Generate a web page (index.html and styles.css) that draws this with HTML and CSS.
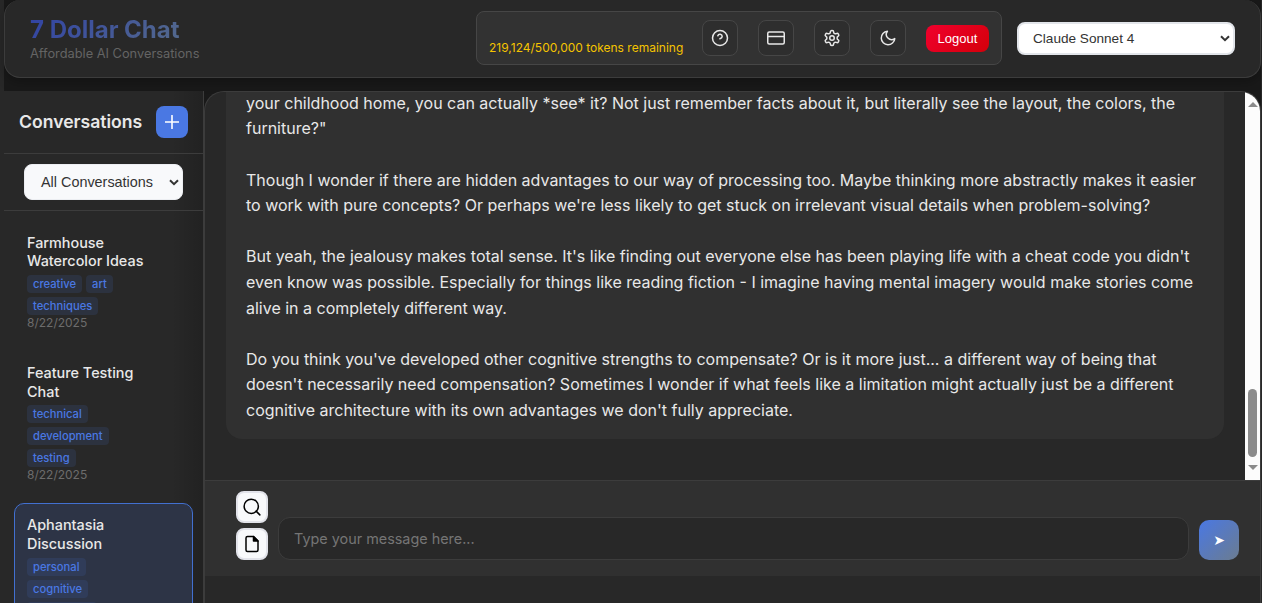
FILE: index.html
```html
<!DOCTYPE html>
<html lang="en">
<head>
	<meta charset="UTF-8">
	<title>7 Dollar Chat</title>
	<link rel="stylesheet" href="styles.css">
</head>
<body>
	<div class="app">
		<header class="header">
			<div class="brand">
				<h1>7 Dollar Chat</h1>
				<p>Affordable AI Conversations</p>
			</div>
			<div class="user-bar">
				<span class="tokens">219,124/500,000 tokens remaining</span>
				<button class="icon-btn"><svg viewBox="0 0 24 24"><circle cx="12" cy="12" r="10"/><path d="M9.09 9a3 3 0 0 1 5.83 1c0 2-3 3-3 3"/></svg></button>
				<button class="icon-btn"><svg viewBox="0 0 24 24"><rect x="1" y="4" width="22" height="16" rx="2"/><path d="M1 10h22"/></svg></button>
				<button class="icon-btn"><svg viewBox="0 0 24 24"><path d="M12.22 2h-.44a2 2 0 0 0-2 2v.18a2 2 0 0 1-1 1.73l-.43.25a2 2 0 0 1-2 0l-.15-.08a2 2 0 0 0-2.73.73l-.22.38a2 2 0 0 0 .73 2.73l.15.1a2 2 0 0 1 1 1.72v.51a2 2 0 0 1-1 1.74l-.15.09a2 2 0 0 0-.73 2.73l.22.38a2 2 0 0 0 2.73.73l.15-.08a2 2 0 0 1 2 0l.43.25a2 2 0 0 1 1 1.73V20a2 2 0 0 0 2 2h.44a2 2 0 0 0 2-2v-.18a2 2 0 0 1 1-1.73l.43-.25a2 2 0 0 1 2 0l.15.08a2 2 0 0 0 2.73-.73l.22-.39a2 2 0 0 0-.73-2.73l-.15-.08a2 2 0 0 1-1-1.74v-.5a2 2 0 0 1 1-1.74l.15-.09a2 2 0 0 0 .73-2.73l-.22-.38a2 2 0 0 0-2.73-.73l-.15.08a2 2 0 0 1-2 0l-.43-.25a2 2 0 0 1-1-1.73V4a2 2 0 0 0-2-2z"/><circle cx="12" cy="12" r="3"/></svg></button>
				<button class="icon-btn"><svg viewBox="0 0 24 24"><path d="M21 12.79A9 9 0 1 1 11.21 3 7 7 0 0 0 21 12.79z"/></svg></button>
				<button class="logout">Logout</button>
			</div>
			<div class="select model">
				<span>Claude Sonnet 4</span>
				<svg viewBox="0 0 10 7"><path d="M1 1.2l4 4 4-4"/></svg>
			</div>
		</header>

		<div class="content">
			<aside class="sidebar">
				<div class="side-head">
					<h2>Conversations</h2>
					<button class="add"><svg viewBox="0 0 14 14"><path d="M7 .5v13M.5 7h13"/></svg></button>
				</div>
				<div class="filter">
					<div class="select">
						<span>All Conversations</span>
						<svg viewBox="0 0 10 7"><path d="M1 1.2l4 4 4-4"/></svg>
					</div>
				</div>
				<ul class="list">
					<li>
						<h3>Farmhouse<br>Watercolor Ideas</h3>
						<div class="tags"><span>creative</span><span>art</span><span>techniques</span></div>
						<p class="date">8/22/2025</p>
					</li>
					<li>
						<h3>Feature Testing<br>Chat</h3>
						<div class="tags"><span>technical</span><span>development</span><span>testing</span></div>
						<p class="date">8/22/2025</p>
					</li>
					<li class="active">
						<h3>Aphantasia<br>Discussion</h3>
						<div class="tags"><span>personal</span><span>cognitive</span><span class="cut"></span></div>
					</li>
				</ul>
			</aside>

			<main class="chat">
				<div class="scroll">
					<div class="messages">
						<div class="bubble">
							<p>your childhood home, you can actually *see* it? Not just remember facts about it, but literally see the layout, the colors, the<br>furniture?"</p>
							<p>Though I wonder if there are hidden advantages to our way of processing too. Maybe thinking more abstractly makes it easier<br>to work with pure concepts? Or perhaps we're less likely to get stuck on irrelevant visual details when problem-solving?</p>
							<p>But yeah, the jealousy makes total sense. It's like finding out everyone else has been playing life with a cheat code you didn't<br>even know was possible. Especially for things like reading fiction - I imagine having mental imagery would make stories come<br>alive in a completely different way.</p>
							<p>Do you think you've developed other cognitive strengths to compensate? Or is it more just... a different way of being that<br>doesn't necessarily need compensation? Sometimes I wonder if what feels like a limitation might actually just be a different<br>cognitive architecture with its own advantages we don't fully appreciate.</p>
						</div>
					</div>
					<div class="scrollbar">
						<i class="up"></i>
						<i class="thumb"></i>
						<i class="down"></i>
					</div>
				</div>
				<div class="composer">
					<div class="tools">
						<button><svg viewBox="0 0 24 24"><circle cx="11" cy="11" r="9.5"/><path d="M17.5 17.5L22.5 22.5"/></svg></button>
						<button><svg viewBox="0 0 24 24"><path d="M14 2H6a2 2 0 0 0-2 2v16a2 2 0 0 0 2 2h12a2 2 0 0 0 2-2V8z"/><path class="fold" d="M14 2v6h6z"/></svg></button>
					</div>
					<input class="message" type="text" placeholder="Type your message here...">
					<button class="send">➤</button>
				</div>
			</main>
		</div>
	</div>
</body>
</html>
```

FILE: styles.css
```css
*{
	box-sizing: border-box;
	margin: 0;
	padding: 0;
}
body{
	height: 603px;
	overflow: hidden;
	padding: 0 1px 0 4px;
	background: #282828;
	color: #e8e8e8;
	font-family: Inter, sans-serif;
}
ul{
	list-style: none;
}
button{
	display: flex;
	align-items: center;
	justify-content: center;
	border: none;
}
svg{
	fill: none;
	stroke: currentColor;
	stroke-width: 2;
	stroke-linecap: round;
	stroke-linejoin: round;
}
.app{
	display: flex;
	flex-direction: column;
	gap: 13px;
	height: 603px;
	background: #191919;
}
.header{
	display: flex;
	align-items: center;
	flex: none;
	height: 78px;
	padding: 0 25px;
	border: 1px solid #3c3c3c;
	border-top: none;
	border-radius: 16px;
	background: #282828;
	box-shadow: 0 4px 12px rgba(0,0,0,0.25);
}
.brand{
	flex: 1;
}
.brand h1{
	width: max-content;
	font-size: 24px;
	line-height: 29px;
	font-weight: 700;
	color: transparent;
	background: linear-gradient(135deg, #3143a5, #546a8c);
	-webkit-background-clip: text;
	background-clip: text;
}
.brand p{
	margin-top: 2px;
	font-size: 12.8px;
	line-height: 16px;
	color: #646464;
}
.user-bar{
	display: flex;
	align-items: center;
	width: 526px;
	height: 54px;
	padding: 0 12px;
	margin: 0 15px 2px 0;
	border: 1px solid #464646;
	border-radius: 8px;
	background: #323232;
}
.tokens{
	flex: 1;
	padding-top: 20px;
	font-size: 12px;
	line-height: 15px;
	color: #f5c400;
	white-space: nowrap;
}
.icon-btn{
	width: 36px;
	height: 36px;
	margin-right: 20px;
	border: 1px solid #464646;
	border-radius: 8px;
	background: #2e2e2e;
	color: #e8e8e8;
}
.icon-btn svg{
	width: 18px;
	height: 18px;
}
.logout{
	width: 63px;
	height: 27px;
	margin-top: 1px;
	border-radius: 8px;
	background: linear-gradient(135deg, #f0002d, #d4000a);
	color: #fff;
	font: 13px "Liberation Sans", sans-serif;
}
.select{
	display: flex;
	align-items: center;
	justify-content: space-between;
	border: 2px solid #e2e5ea;
	border-radius: 8px;
	background: #fff;
	color: #333;
	font-family: "Liberation Sans", sans-serif;
	white-space: nowrap;
}
.select svg{
	width: 10px;
	height: 7px;
	flex: none;
	stroke-linecap: butt;
	stroke-linejoin: miter;
}
.model{
	width: 218px;
	height: 33px;
	padding: 0 3px 0 14px;
	font-size: 13.6px;
}
.content{
	display: flex;
	flex: 1;
	min-height: 0;
}
.sidebar{
	flex: none;
	width: 200px;
	overflow: hidden;
	border-right: 1px solid #3c3c3c;
	background: linear-gradient(to right, rgba(0,0,0,0) 84%, rgba(0,0,0,0.16)), #282828;
}
.side-head{
	display: flex;
	align-items: center;
	justify-content: space-between;
	height: 63px;
	padding: 0 15px;
	border-bottom: 1px solid #3c3c3c;
}
.side-head h2{
	padding-bottom: 2px;
	font-size: 17.6px;
	font-weight: 600;
}
.add{
	width: 32px;
	height: 32px;
	border-radius: 8px;
	background: #4a78e3;
	color: #fff;
}
.add svg{
	width: 14px;
	height: 14px;
	stroke-width: 1.6;
}
.filter{
	height: 57px;
	padding: 10px 20px;
	border-bottom: 1px solid #3c3c3c;
}
.filter .select{
	height: 36px;
	padding: 0 3px 0 16px;
	border: 1px solid #eceef2;
	background: #f8f9fb;
	font-size: 14.4px;
}
.list{
	display: flex;
	flex-direction: column;
	gap: 6.8px;
	padding: 9.7px 10px;
}
.list li{
	padding: 12px;
	border: 1px solid transparent;
	border-radius: 10px;
}
.list .active{
	height: 150px;
	border-color: #4270d0;
	background: #2d3446;
}
.list h3{
	font-size: 14.4px;
	line-height: 1.3;
	font-weight: 500;
}
.tags{
	display: flex;
	flex-wrap: wrap;
	gap: 4px;
	width: 120px;
	margin-top: 4px;
}
.tags span{
	padding: 0 6px;
	border-radius: 4px;
	background: rgba(74,120,227,0.12);
	color: #4a78e3;
	font-size: 11.2px;
	line-height: 18px;
	font-weight: 500;
}
.tags .cut{
	width: 70px;
	height: 18px;
}
.date{
	font-size: 12px;
	line-height: 16px;
	color: #6c6c6c;
}
.chat{
	display: flex;
	flex: 1;
	flex-direction: column;
	min-width: 0;
	overflow: hidden;
	border: 1px solid #3c3c3c;
	border-bottom: none;
	border-radius: 20px 20px 0 0;
	background: #282828;
}
.scroll{
	display: flex;
	flex: none;
	height: 388px;
}
.messages{
	display: flex;
	flex: 1;
	flex-direction: column;
	justify-content: flex-end;
	overflow: hidden;
	padding: 0 21px 41px;
}
.bubble{
	display: flex;
	flex-direction: column;
	gap: 25.6px;
	padding: 16px 20px 15.5px;
	border-radius: 16px;
	background: #303030;
	font-size: 16px;
	line-height: 1.6;
	white-space: nowrap;
}
.scrollbar{
	display: flex;
	flex-direction: column;
	align-items: center;
	width: 15px;
	padding: 10px 0;
	background: #fcfcfc;
}
.up,.down{
	border: 5px solid transparent;
}
.up{
	border-top: none;
	border-bottom-color: #8b8b8b;
}
.down{
	margin-top: 8px;
	border-bottom: none;
	border-top-color: #8b8b8b;
}
.thumb{
	width: 9px;
	height: 68px;
	margin-top: auto;
	border-radius: 5px;
	background: #8b8b8b;
}
.composer{
	display: flex;
	align-items: flex-end;
	flex: none;
	gap: 10px;
	height: 96px;
	padding: 0 21px 16px 31px;
	border-top: 1px solid #3c3c3c;
	background: #303030;
}
.tools{
	display: flex;
	flex-direction: column;
	gap: 5px;
}
.tools button{
	width: 32px;
	height: 32px;
	border: 2px solid #e2e3ea;
	border-radius: 8px;
	background: #f8f9fb;
	color: #000;
}
.tools svg{
	width: 18px;
	height: 18px;
}
.fold{
	fill: currentColor;
}
.message{
	flex: 1;
	height: 43px;
	padding: 0 15px 1px;
	border: 1px solid #3c3c3c;
	border-radius: 12px;
	background: #282828;
	color: #e8e8e8;
	font: 14.4px Inter, sans-serif;
}
.message::placeholder{
	color: #757575;
}
.send{
	width: 40px;
	height: 40px;
	border-radius: 10px;
	background: linear-gradient(135deg, #4a78e3, #6b7c90);
	color: #fff;
	font: 14px "DejaVu Sans", sans-serif;
}
```
